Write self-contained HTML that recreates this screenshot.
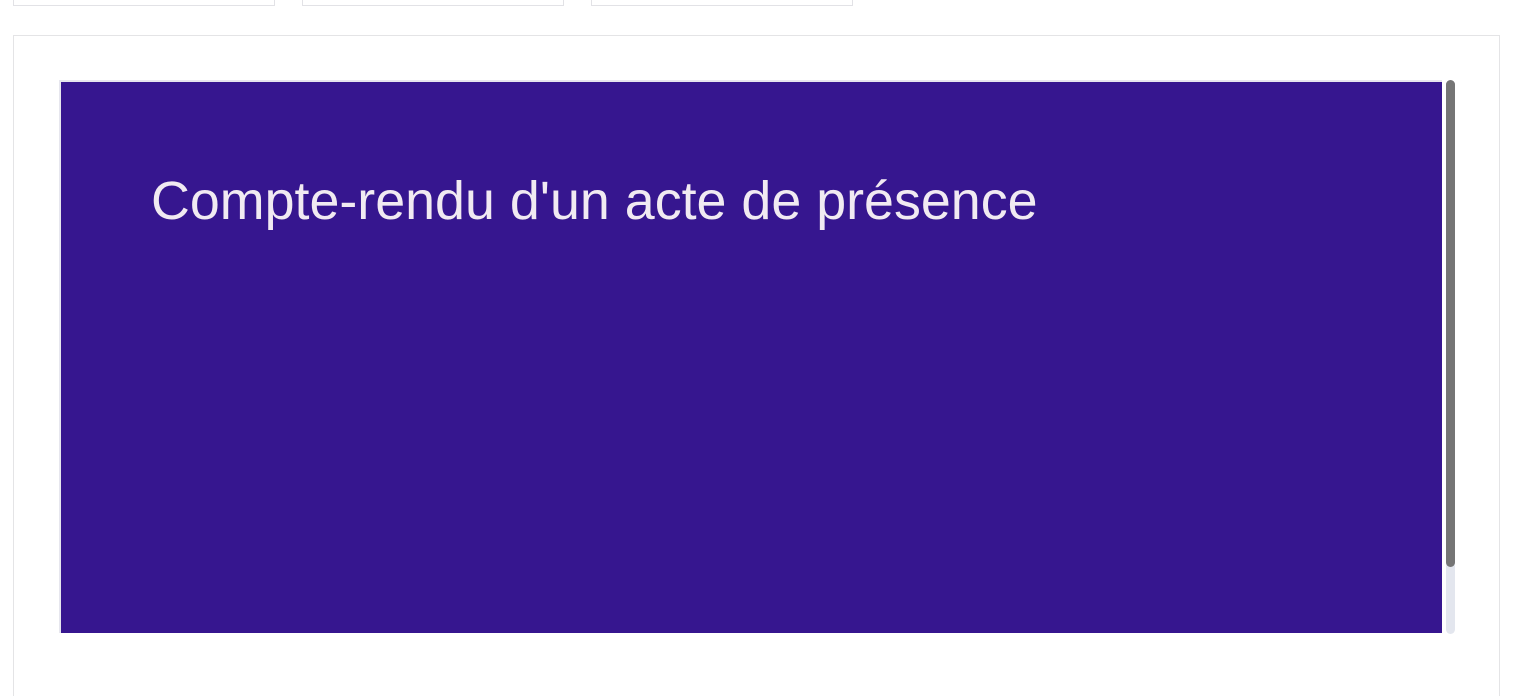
<!DOCTYPE html>
<html><head><meta charset="utf-8"><style>
html,body{margin:0;padding:0;background:#fff;width:1537px;height:681px;overflow:hidden;font-family:"Liberation Sans",sans-serif;}
.tab{position:absolute;top:-2px;height:7px;width:260px;border:1px solid #e2e2e6;border-top:none;background:#fff;}
.outer{position:absolute;left:13px;top:35px;width:1485px;height:660px;border:1px solid #e4e4e6;border-bottom:none;background:#fff;}
.frame{position:absolute;left:59px;top:80px;width:1383px;height:553px;border-style:solid;border-color:#e6e6ee;border-width:2px 0 0 2px;background:#36168f;box-sizing:border-box;}
.frame h1{position:absolute;left:90px;top:93px;margin:0;font-weight:normal;font-size:53.8px;line-height:1;color:#f1eaf2;white-space:nowrap;}
.track{position:absolute;left:1446px;top:80px;width:9px;height:554px;background:#e3e6ee;border-radius:5px;}
.thumb{position:absolute;left:1446px;top:80px;width:9px;height:487px;background:#757575;border-radius:5px;}
</style></head><body>
<div class="tab" style="left:13px"></div>
<div class="tab" style="left:302px"></div>
<div class="tab" style="left:591px"></div>
<div class="outer"></div>
<div class="frame"><h1>Compte-rendu d'un acte de présence</h1></div>
<div class="track"></div>
<div class="thumb"></div>
</body></html>
